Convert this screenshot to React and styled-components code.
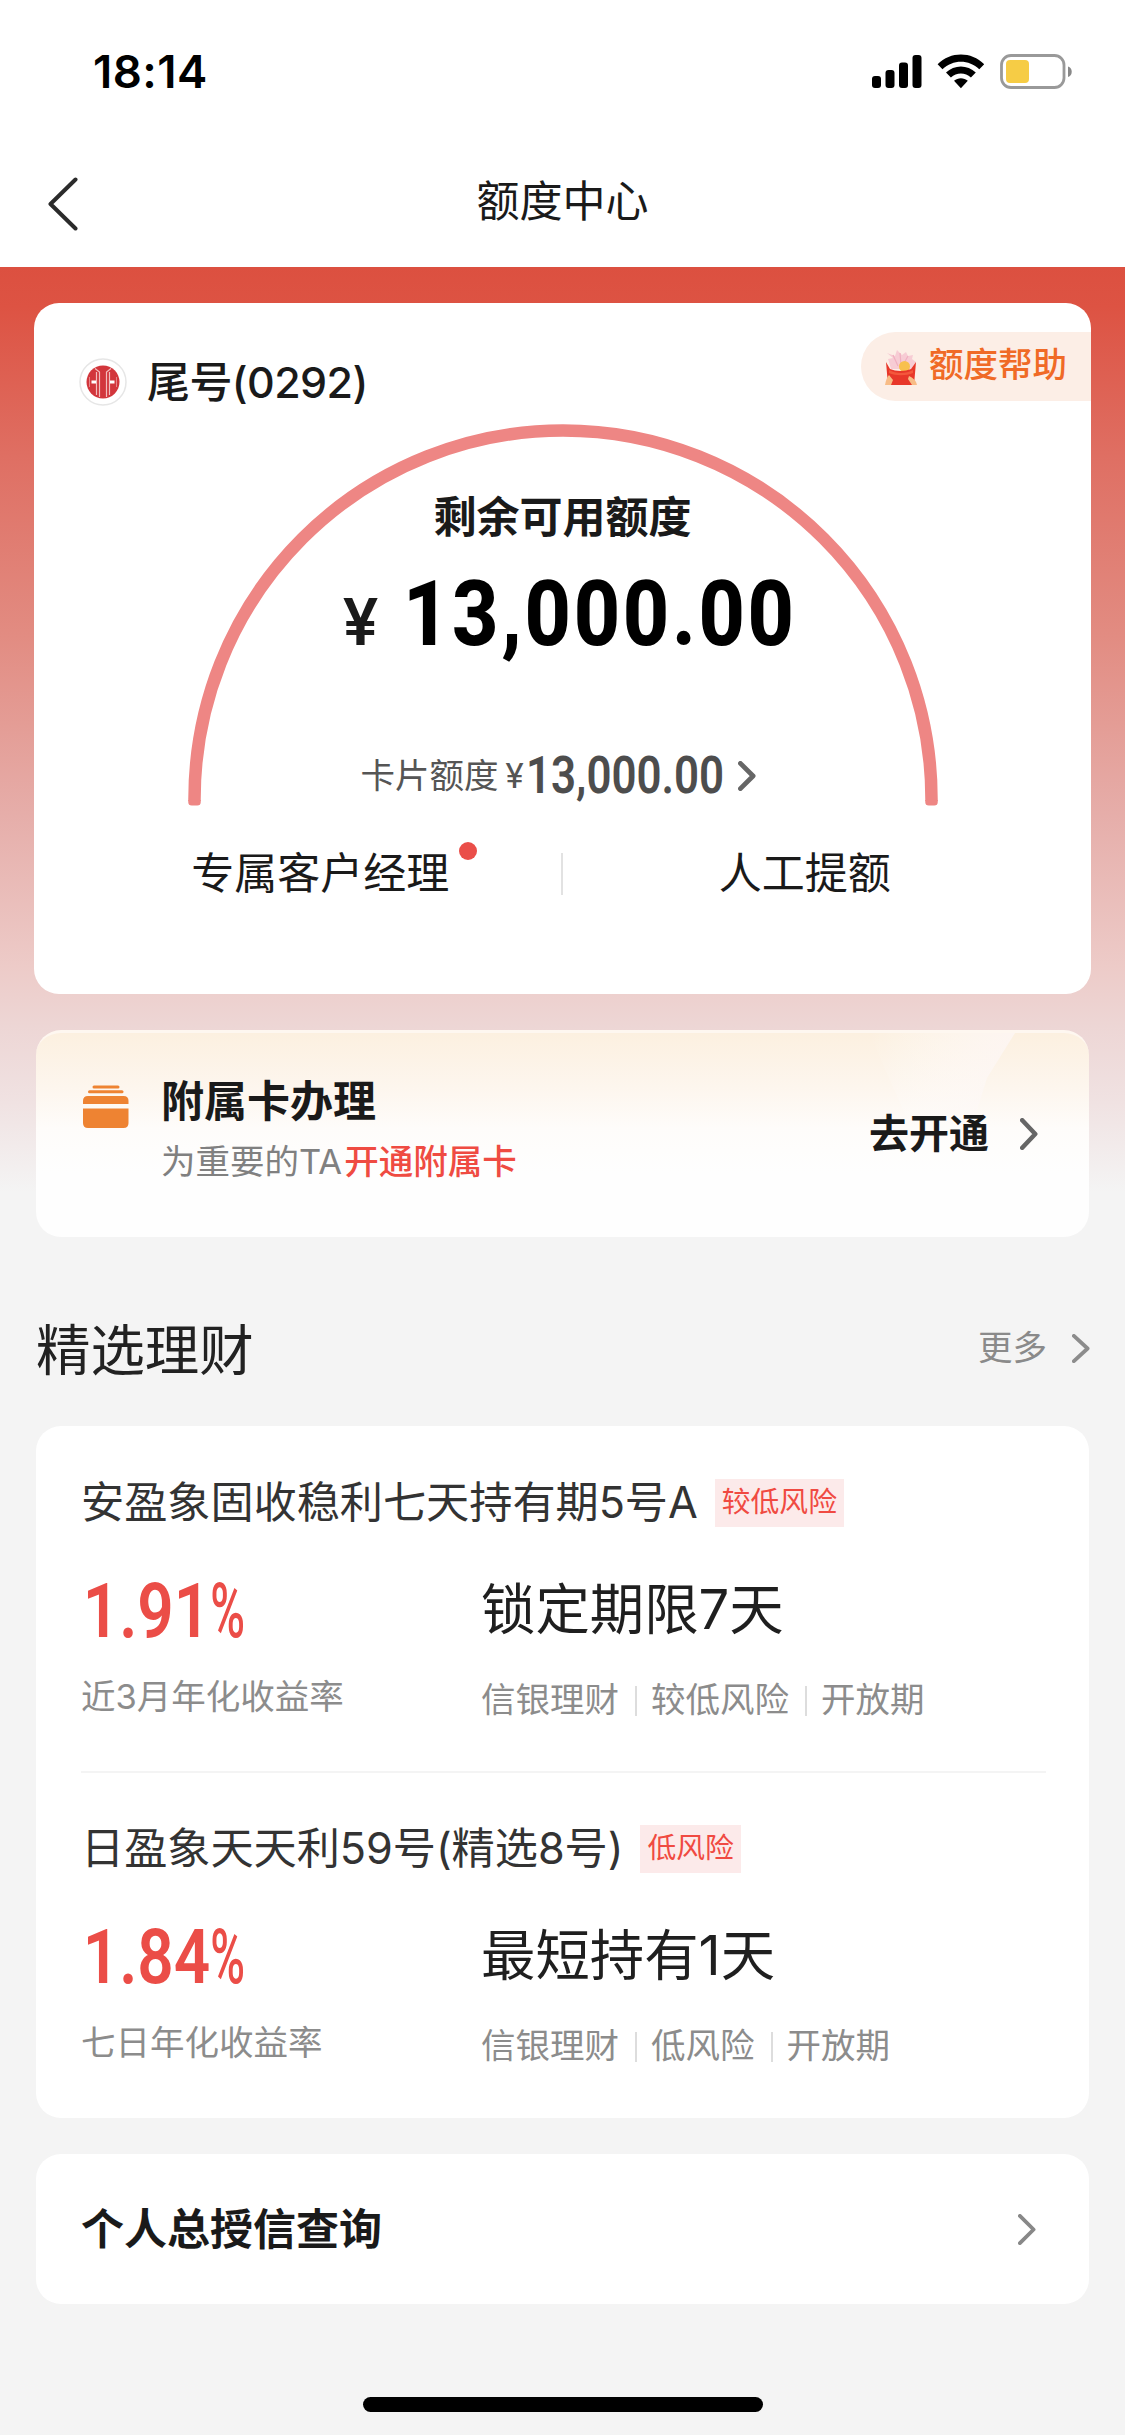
import React from 'react'
import styled, { createGlobalStyle } from 'styled-components'

const products = [
    {
        name: '安盈象固收稳利七天持有期5号A',
        risk: '较低风险',
        rate: '1.91',
        rateLabel: '近3月年化收益率',
        term: '锁定期限7天',
        meta: ['信银理财', '较低风险', '开放期'],
    },
    {
        name: '日盈象天天利59号(精选8号)',
        risk: '低风险',
        rate: '1.84',
        rateLabel: '七日年化收益率',
        term: '最短持有1天',
        meta: ['信银理财', '低风险', '开放期'],
    },
]

function Chevron({ width = 17, height = 30, stroke = 4, color = '#888' }) {
    const s = stroke / 2
    return (
        <svg width={width} height={height} fill="none">
            <path
                d={`M${s} ${s}L${width - s - 0.5} ${height / 2}L${s} ${height - s}`}
                stroke={color}
                strokeWidth={stroke}
                strokeLinecap="round"
                strokeLinejoin="round"
            />
        </svg>
    )
}

function StatusBar() {
    return (
        <Status>
            <Time>18:14</Time>
            <StatusIcons>
                <svg width="50" height="36" viewBox="0 0 50 36">
                    <rect x="0" y="22" width="9" height="12" rx="3" />
                    <rect x="13.5" y="16" width="9" height="18" rx="3" />
                    <rect x="27" y="8.500" width="9" height="25.500" rx="3" />
                    <rect x="40.500" y="1" width="9" height="33" rx="3" />
                </svg>
                <svg width="48" height="36" viewBox="0 0 48 36">
                    <path d="M0.600 10.200C13.500 -2.800 34.300 -2.800 47.200 10.200L42.300 15.300C32 5.200 15.800 5.200 5.500 15.300Z" />
                    <path d="M9 18.600C17.300 10.400 30.500 10.400 38.800 18.600L33.900 23.600C28.300 18.200 19.500 18.200 13.900 23.600Z" />
                    <path d="M17 26.800C20.900 23.300 26.900 23.300 30.800 26.800L23.900 34.200Z" />
                </svg>
                <svg width="74" height="36" viewBox="0 0 74 36">
                    <rect x="1.500" y="1.500" width="62.500" height="32" rx="9.500" fill="none" stroke="#999" strokeWidth="2.800" />
                    <rect x="6" y="6" width="23" height="23" rx="4" fill="#f6cc45" />
                    <path d="M68 12.500C73 14 73 21.500 68 23Z" fill="#888" />
                </svg>
            </StatusIcons>
        </Status>
    )
}

function BankLogo() {
    return (
        <svg width="48" height="48" viewBox="0 0 48 48" fill="none">
            <circle cx="24" cy="24" r="23" fill="#fff" stroke="#e6e6e6" strokeWidth="1.500" />
            <circle cx="24" cy="24" r="16.500" fill="#d2363c" />
            <path
                d="M16 10.500L20.500 14V39M32 10.500L27.500 14V39M17.500 14V37M30.500 14V37"
                stroke="#f3bcbc"
                strokeWidth="1.200"
            />
            <path d="M10.500 19V29M37.500 19V29" stroke="#e58488" strokeWidth="1" />
            <path d="M12.500 24H17M31 24H35.500" stroke="#fff" strokeWidth="3" />
        </svg>
    )
}

// red packet held by two hands, with sparks coming out of it
function RedPacket() {
    return (
        <svg width="34" height="38" viewBox="0 0 34 38">
            <path d="M4 10L9 9L3 4L11 7L13 1L18 6L22 3L24 7L29 6L28 10L32 13L27 20H7L5 13Z" fill="#f7ccd4" />
            <path d="M9 6L14 17M16 4L17 16M24 7L19 16" stroke="#f0afc0" strokeWidth="1.200" />
            <circle cx="20.500" cy="17.500" r="5.500" fill="#f8c04e" />
            <path d="M2 13L6 20C12 22.500 21 22.500 27 20L32 13L30 36H4Z" fill="#e8372a" />
            <path d="M5 21C12 25 22 25 29 21V24C22 27 12 27 5 24Z" fill="#f4573c" />
            <path d="M1 36C2 31 3 28 5 26L9 31L7 36ZM33 36C32 31 29 29 25 27L24 30L28 36Z" fill="#f8bc86" />
        </svg>
    )
}

function CardsIcon() {
    return (
        <svg width="46" height="44" viewBox="0 0 46 44" fill="#ee8332">
            <rect x="9.500" y="0.500" width="27" height="3" rx="1.500" />
            <rect x="5" y="5.200" width="35.500" height="3" rx="1.500" />
            <path d="M0 19V16Q0 11 5 11H40.500Q45.500 11 45.500 16V19Z" />
            <path d="M0 23.500H45.500V38Q45.500 43 40.500 43H5Q0 43 0 38Z" />
        </svg>
    )
}

function Product({ item }) {
    return (
        <ProductBlock>
            <ProductTitle>
                {item.name}
                <RiskTag>{item.risk}</RiskTag>
            </ProductTitle>
            <ProductBody>
                <div>
                    <Rate>{item.rate}<i>%</i></Rate>
                    <RateLabel>{item.rateLabel}</RateLabel>
                </div>
                <div>
                    <Term>{item.term}</Term>
                    <Meta>
                        {item.meta.map((m) => <span key={m}>{m}</span>)}
                    </Meta>
                </div>
            </ProductBody>
        </ProductBlock>
    )
}

function App() {
    return (
        <Page>
            <GlobalStyle />
            <StatusBar />
            <NavBar>
                <svg width="32" height="54" viewBox="0 0 32 54" fill="none">
                    <path d="M28.500 2.500L3.500 27L28.500 51.500" stroke="#2b2b2b" strokeWidth="4" strokeLinecap="round" strokeLinejoin="round" />
                </svg>
                <h1>额度中心</h1>
            </NavBar>
            <Content>
                <QuotaCard>
                    <HelpBadge>
                        <RedPacket />
                        额度帮助
                    </HelpBadge>
                    <CardHeader>
                        <BankLogo />
                        <span>尾号(0292)</span>
                    </CardHeader>
                    <Gauge>
                        <Arc viewBox="0 0 750 382">
                            <path
                                d="M6.500 377V375A368.500 368.500 0 0 1 743.500 375V377"
                                fill="none"
                                stroke="#ee8684"
                                strokeWidth="12.500"
                            />
                            <path d="M0.250 376H12.750V378Q12.750 381.500 9.250 381.500H3.750Q0.250 381.500 0.250 378ZM737.250 376H749.750V378Q749.750 381.500 746.250 381.500H740.750Q737.250 381.500 737.250 378Z" fill="#ee8684" />
                        </Arc>
                        <GaugeLabel>剩余可用额度</GaugeLabel>
                        <Amount>
                            <i>¥</i>
                            <b>13,000.00</b>
                        </Amount>
                        <CardLimit>
                            卡片额度
                            <i>¥</i>
                            <b>13,000.00</b>
                            <Chevron width={18} height={30} stroke={4.8} color="#666" />
                        </CardLimit>
                    </Gauge>
                    <Actions>
                        <Action $dot><span>专属客户经理</span></Action>
                        <Action><span>人工提额</span></Action>
                    </Actions>
                </QuotaCard>

                <ExtraCard>
                    <Shine viewBox="0 0 240 120">
                        <defs>
                            <linearGradient id="shine" x1="0" y1="0" x2="1" y2="0">
                                <stop offset="0" stopColor="#fff" stopOpacity="0" />
                                <stop offset="1" stopColor="#fdf6f4" stopOpacity=".85" />
                            </linearGradient>
                        </defs>
                        <path d="M20 0H166L138 45L124 90H60Z" fill="url(#shine)" />
                    </Shine>
                    <CardsIcon />
                    <ExtraText>
                        <h2>附属卡办理</h2>
                        <p>为重要的TA<em>开通附属卡</em></p>
                    </ExtraText>
                    <OpenLink>
                        去开通
                        <Chevron width={18} height={32} stroke={4.5} color="#666" />
                    </OpenLink>
                </ExtraCard>

                <SectionHead>
                    <h2>精选理财</h2>
                    <More>
                        更多
                        <Chevron width={18} height={29} stroke={3.8} color="#8c8c8c" />
                    </More>
                </SectionHead>

                <ProductCard>
                    {products.map((p) => <Product key={p.name} item={p} />)}
                </ProductCard>

                <LinkCard>
                    <span>个人总授信查询</span>
                    <Chevron width={18} height={31} stroke={3.8} color="#888" />
                </LinkCard>
            </Content>
            <HomeBar />
        </Page>
    )
}

export default App

const GlobalStyle = createGlobalStyle`
*{
    box-sizing:border-box;
}
body{
    margin:0;
    background:#f4f4f4;
}
h1,h2,p{
    margin:0;
    font-weight:400;
}
i,em{
    font-style:normal;
}
svg{
    display:block;
    flex-shrink:0;
}
`

const Page = styled.div`
width:1125px;
height:2435px;
overflow:hidden;
display:flex;
flex-direction:column;
background:#f4f4f4;
color:#1a1a1a;
font-family:Inter, "Noto Sans CJK SC", sans-serif;
white-space:nowrap;
`

const Status = styled.div`
height:132px;
padding:42px 51px 0 93px;
display:flex;
justify-content:space-between;
background:#fff;
`

const Time = styled.div`
font-size:45.500px;
line-height:60px;
font-weight:600;
letter-spacing:.5px;
color:#000;
`

const StatusIcons = styled.div`
display:flex;
gap:15px;
padding-top:12px;
`

const NavBar = styled.div`
height:135px;
padding:8px 47px 0;
display:grid;
grid-template-columns:32px 1fr 32px;
align-items:center;
background:#fff;
h1{
    font-size:43px;
    line-height:60px;
    text-align:center;
    padding-bottom:6px;
}
`

const Content = styled.div`
flex:1;
padding:36px 34px 0;
background:linear-gradient(180deg, #dc5040 0, #dd5343 40px, #df6f63 190px, #e28c82 370px, #e6aeaa 550px, #edcbc8 700px, #edd6d5 760px, #f0e2e2 835px, #f4f4f4 925px);
`

const QuotaCard = styled.section`
position:relative;
height:691px;
padding-top:49px;
border-radius:25px;
background:#fff;
overflow:hidden;
`

const HelpBadge = styled.div`
position:absolute;
top:29px;
right:0;
width:230px;
height:69px;
padding:0 0 4px 23px;
display:flex;
align-items:center;
gap:11px;
border-radius:35px 0 0 35px;
background:#fceee6;
color:#f06a26;
font-size:34.500px;
font-weight:500;
line-height:62px;
svg{
    margin-top:6px;
}
`

const CardHeader = styled.div`
height:60px;
padding-left:45px;
display:flex;
align-items:center;
gap:20px;
font-size:43px;
font-weight:500;
letter-spacing:-.6px;
line-height:60px;
span{
    padding-bottom:1px;
}
`

const Gauge = styled.div`
position:relative;
width:750px;
height:382px;
margin:12px auto 0;
padding-top:63px;
`

const Arc = styled.svg`
position:absolute;
left:0;
top:0;
width:750px;
height:382px;
`

const GaugeLabel = styled.div`
font-size:43px;
line-height:60px;
font-weight:700;
text-align:center;
`

const Amount = styled.div`
height:90px;
margin-top:22px;
padding-left:155px;
display:flex;
align-items:baseline;
font-family:Roboto, sans-serif;
line-height:90px;
i{
    width:60px;
    font-family:Inter, sans-serif;
    font-size:64px;
    font-weight:600;
    line-height:80px;
}
b{
    font-size:91px;
    font-weight:800;
    color:#000;
    letter-spacing:3px;
    transform:scaleX(.885);
    transform-origin:0 50%;
}
`

const CardLimit = styled.div`
height:50px;
margin-top:92px;
padding-left:173px;
display:flex;
align-items:center;
font-size:34.500px;
line-height:50px;
color:#555;
i{
    margin-left:7px;
    width:20px;
    font-family:Roboto, sans-serif;
}
b{
    width:212px;
    font-family:Roboto, sans-serif;
    font-size:51px;
    font-weight:600;
    color:#4d4d4d;
    transform:scaleX(.86);
    transform-origin:0 50%;
}
`

const Actions = styled.div`
height:60px;
margin-top:37px;
padding:0 44px;
display:grid;
grid-template-columns:1fr 1fr;
`

const Action = styled.div`
display:flex;
justify-content:center;
align-items:center;
font-size:43px;
line-height:60px;
background:linear-gradient(#e2e2e2, #e2e2e2) no-repeat right 10px / ${(p) => (p.$dot ? '2px' : '0')} 42px;
span{
    position:relative;
}
span::after{
    content:'';
    display:${(p) => (p.$dot ? 'block' : 'none')};
    position:absolute;
    right:-28px;
    top:-1px;
    width:18px;
    height:18px;
    border-radius:50%;
    background:#ea4e49;
}
`

const ExtraCard = styled.section`
position:relative;
height:207px;
margin:36px 2px 0;
padding:52px 51px 0 47px;
display:flex;
border-radius:25px;
border-top:3px solid #fef7f0;
background:linear-gradient(180deg, #fcf0e0 0, #fdf6ee 55px, #fefcfa 95px, #fefefe 140px);
`

const Shine = styled.svg`
position:absolute;
right:0;
top:0;
width:240px;
height:120px;
`

const ExtraText = styled.div`
flex:1;
padding-left:32px;
h2{
    margin-top:-14px;
    font-size:43px;
    line-height:60px;
    font-weight:700;
}
p{
    margin-top:6px;
    font-size:34.500px;
    line-height:50px;
    color:#808080;
}
em{
    margin-left:2px;
    color:#ef4b42;
    font-weight:500;
}
`

const OpenLink = styled.div`
position:relative;
height:60px;
margin-top:19px;
display:flex;
align-items:center;
gap:31px;
font-size:40px;
font-weight:700;
line-height:60px;
`

const SectionHead = styled.div`
height:189px;
padding:37px 1px 0 2px;
display:flex;
justify-content:space-between;
align-items:center;
h2{
    font-size:54.400px;
    line-height:80px;
    color:#222;
}
`

const More = styled.div`
display:flex;
align-items:center;
gap:25px;
padding-bottom:4px;
font-size:34.500px;
line-height:50px;
color:#8a8a8a;
`

const ProductCard = styled.section`
height:692px;
margin:0 2px;
padding:0 43px 0 45px;
border-radius:25px;
background:#fff;
`

const ProductBlock = styled.article`
height:345px;
padding-top:46px;
& + &{
    height:347px;
    border-top:2px solid #f4f4f4;
    padding-top:45px;
}
`

const ProductTitle = styled.div`
height:60px;
display:flex;
align-items:center;
font-size:43.200px;
letter-spacing:-.05px;
line-height:60px;
color:#333;
`

const RiskTag = styled.span`
height:48px;
margin:1px 0 0 17px;
padding:0 7px;
background:#fceaea;
color:#f04a42;
font-size:28.800px;
letter-spacing:0;
line-height:45px;
`

const ProductBody = styled.div`
display:grid;
grid-template-columns:400px 1fr;
`

const Rate = styled.div`
margin-top:39px;
height:80px;
padding-left:2px;
font-family:Roboto, sans-serif;
font-size:76px;
font-weight:600;
line-height:80px;
color:#eb4d47;
transform:scaleX(.84);
transform-origin:0 50%;
i{
    display:inline-block;
    font-weight:500;
    transform:scaleX(.74);
    transform-origin:0 50%;
}
`

const RateLabel = styled.div`
margin-top:21px;
font-size:34.500px;
line-height:50px;
color:#8c8c8c;
`

const Term = styled.div`
margin-top:37px;
height:80px;
font-size:54.400px;
line-height:80px;
color:#1f1f1f;
`

const Meta = styled.div`
margin-top:26px;
display:flex;
font-size:34.500px;
line-height:50px;
color:#8c8c8c;
span + span{
    margin-left:16px;
    padding-left:16px;
    background:linear-gradient(#ddd, #ddd) no-repeat left 11px / 2px 30px;
}
`

const LinkCard = styled.section`
height:150px;
margin:36px 2px 0;
padding:0 53px 0 45px;
display:flex;
justify-content:space-between;
align-items:center;
border-radius:25px;
background:#fff;
font-size:43px;
line-height:60px;
font-weight:700;
`

const HomeBar = styled.div`
width:400px;
height:15px;
margin:0 auto 23px;
flex-shrink:0;
border-radius:8px;
background:#000;
`
